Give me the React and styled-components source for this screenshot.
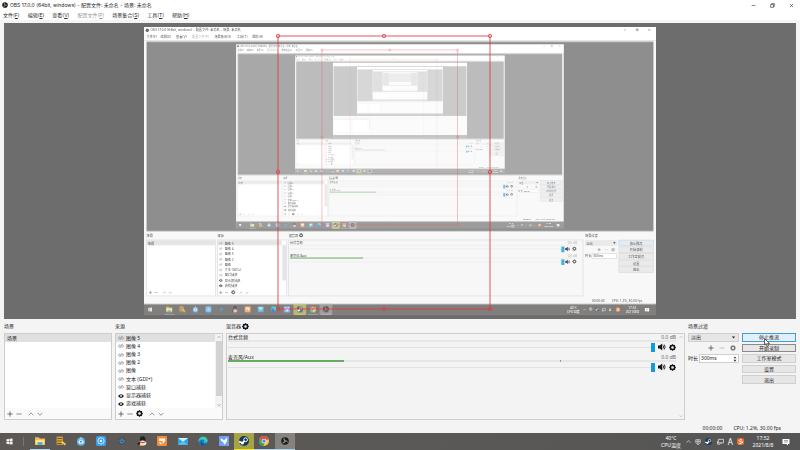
import React from 'react';
import styled, { createGlobalStyle } from 'styled-components';

const sans = '"Noto Sans", "Noto Sans CJK SC", sans-serif';
const wide = 'Inter, "Noto Sans CJK SC", sans-serif';

const menus = [
  { name: '文件', letter: 'F' },
  { name: '编辑', letter: 'E' },
  { name: '查看', letter: 'V' },
  { name: '配置文件', letter: 'P', disabled: true },
  { name: '场景集合', letter: 'S' },
  { name: '工具', letter: 'T' },
  { name: '帮助', letter: 'H' },
];

const sources = [
  { name: '图像 5' },
  { name: '图像 4' },
  { name: '图像 3' },
  { name: '图像 2' },
  { name: '图像' },
  { name: '文本 (GDI+)' },
  { name: '窗口捕获' },
  { name: '显示器捕获', visible: true },
  { name: '游戏捕获', visible: true },
];

const channels = [
  { name: '台式音频', level: 0 },
  { name: '麦克风/Aux', level: 26, peak: 74 },
];

const controls = ['停止推流', '开始录制', '工作室模式', '设置', '退出'];
const windowTitle = 'OBS 17.0.0 (64bit, windows) - 配置文件: 未命名 - 场景: 未命名';

/* ---------- icons ---------- */

function Icon({ size = 7, children, ...rest }) {
  return (
    <svg width={size} height={size} viewBox="0 0 16 16" fill="none" aria-hidden="true" {...rest}>
      {children}
    </svg>
  );
}

const Obs = (props) => (
  <Icon {...props}>
    <circle cx="8" cy="8" r="7.5" fill="#1e1e1e" />
    <path d="M8 8Q5 6 6.500 2.500M8 8q3.500-1 5.500 2M8 8q-.5 4-4.500 3.500" stroke="#b5b5b5" strokeWidth="1.800" />
  </Icon>
);

const Gear = ({ color = '#151515', ...props }) => (
  <Icon {...props}>
    <circle cx="8" cy="8" r="4.600" stroke={color} strokeWidth="3.200" />
    <path d="M8 .5V3M8 13v2.500M.5 8H3M13 8h2.500M2.700 2.700l1.800 1.800M11.500 11.500l1.800 1.800M2.700 13.300l1.800-1.800M11.500 4.500l1.800-1.800" stroke={color} strokeWidth="3" />
  </Icon>
);

const Plus = (props) => (
  <Icon {...props}><path d="M8 1v14M1 8h14" stroke="#555" strokeWidth="2.200" /></Icon>
);
const Minus = ({ color = '#777', ...props }) => (
  <Icon {...props}><path d="M1 8h14" stroke={color} strokeWidth="2.200" /></Icon>
);
const Up = ({ color = '#777', ...props }) => (
  <Icon {...props}><path d="M2 11.500l6-6.500 6 6.500" stroke={color} strokeWidth="2" /></Icon>
);
const Down = ({ color = '#777', ...props }) => (
  <Icon {...props}><path d="M2 5l6 6.500 6-6.500" stroke={color} strokeWidth="2" /></Icon>
);

const Eye = (props) => (
  <Icon {...props}>
    <path d="M0 8q8-10 16 0q-8 10-16 0z" fill="#1c1c1c" />
    <circle cx="8" cy="8" r="2.800" fill="#fff" />
    <circle cx="8" cy="8" r="1.400" fill="#1c1c1c" />
  </Icon>
);
const EyeOff = (props) => (
  <Icon {...props}>
    <path d="M6 4Q3 4.500 1 8q2 3.500 5 4M10 4q3 .5 5 4q-2 3.500-5 4M5 13l6-10" stroke="#858585" strokeWidth="1.800" />
    <circle cx="8" cy="8" r="1.800" fill="#999" />
  </Icon>
);

const Speaker = (props) => (
  <Icon {...props}>
    <path d="M0 5h3.500l5-4v14l-5-4H0z" fill="#151515" />
    <path d="M10.500 5q2 3 0 6M12.500 3q3.500 5 0 10" stroke="#151515" strokeWidth="1.700" />
  </Icon>
);

const Minimize = (props) => (
  <Icon {...props}><path d="M2 8h12" stroke="#444" strokeWidth="2" /></Icon>
);
const Restore = (props) => (
  <Icon {...props}><path d="M2 5h9v9H2zM5 5V2h9v9h-3" stroke="#333" strokeWidth="2" /></Icon>
);
const Close = (props) => (
  <Icon {...props}><path d="M3 3l10 10M13 3L3 13" stroke="#333" strokeWidth="2" /></Icon>
);

const Windows = (props) => (
  <Icon {...props}>
    <path d="M1 3l6-1v5.500H1zM8 1.800L15 1v6.500H8zM1 8.500h6V14l-6-1zM8 8.500h7V15l-7-.8z" fill="#f4f4f4" />
  </Icon>
);

const Folder = (props) => (
  <Icon {...props}>
    <path d="M0 2h6l2 2h8v10H0z" fill="#e9b949" />
    <path d="M1 6h14v8H1z" fill="#fbe28d" />
    <path d="M4 10h8v4H4z" fill="#4ca3d8" />
  </Icon>
);
const Tool = (props) => (
  <Icon {...props}>
    <path d="M1 1h10v13H1z" fill="#d9a63c" />
    <path d="M2 4h8M2 8h8M2 12h7" stroke="#5e4618" strokeWidth="1.300" />
    <path d="M9 9l6 5" stroke="#f4cb55" strokeWidth="3" />
  </Icon>
);
const Bird = (props) => (
  <Icon {...props}>
    <circle cx="8" cy="9" r="6.500" fill="#61b1e8" />
    <path d="M8 1l3 4-6 1z" fill="#9bd3f7" />
    <path d="M4 8q4-3 8 0v3q-4 3-8 0z" fill="#e3f3fd" />
    <circle cx="8" cy="9" r="1.500" fill="#2780c4" />
  </Icon>
);
const Ring = (props) => (
  <Icon {...props}>
    <rect width="16" height="16" rx="3" fill="#3d9eea" />
    <circle cx="8" cy="8" r="5" stroke="#d8efff" strokeWidth="1.500" />
    <circle cx="8" cy="8" r="2" fill="#d8efff" />
  </Icon>
);
const Power = (props) => (
  <Icon {...props}>
    <circle cx="8" cy="8" r="7" fill="#3f5566" />
    <path d="M5.500 5a4 4 0 1 0 5 0M8 3v5" stroke="#5aa5d0" strokeWidth="1.700" />
  </Icon>
);
const Penguin = (props) => (
  <Icon {...props}>
    <ellipse cx="9" cy="6" rx="4.500" ry="5.500" fill="#222" />
    <ellipse cx="9" cy="11" rx="6" ry="4" fill="#f4f4f4" />
    <path d="M4 8q5 3 10 0v2q-5 3-10 0z" fill="#d84234" />
    <path d="M1 11l4-2v5H1z" fill="#222" />
    <path d="M4 14h8l-1 2H5z" fill="#e9a22c" />
  </Icon>
);
const Orange = (props) => (
  <Icon {...props}>
    <rect width="16" height="16" rx="2" fill="#ee8c3f" />
    <path d="M3 4h10v4l-4 5V8H3z" fill="#fff3e5" />
    <path d="M4 10l3 3" stroke="#fff3e5" strokeWidth="2" />
  </Icon>
);
const Mail = (props) => (
  <Icon {...props}>
    <path d="M0 3h16v11H0z" fill="#2fa3e4" />
    <path d="M0 3h16l-8 6z" fill="#d5f0fd" />
    <path d="M0 14l8-6 8 6z" fill="#54c4f4" />
  </Icon>
);
const Edge = (props) => (
  <Icon {...props}>
    <circle cx="8" cy="8" r="7.500" fill="#1b7dc9" />
    <path d="M1 7C2 0 14-1 15.500 7c0 3-3 4-6 3q2-4-2-4.500Q3 5 1 9z" fill="#43cba2" />
    <path d="M6 8q0 6 7 5-3 3-7 2-4-3 0-7z" fill="#164f93" />
  </Icon>
);
const Swallow = (props) => (
  <Icon {...props}>
    <rect width="16" height="16" rx="1" fill="#6ba0f2" />
    <path d="M2 4q4 0 6 3l5-5q1 9-5 12l-1-4q-4-1-5-6z" fill="#fff" />
  </Icon>
);
const Steam = (props) => (
  <Icon {...props}>
    <circle cx="8" cy="8" r="8" fill="#173957" />
    <circle cx="10.500" cy="6" r="3" stroke="#fff" strokeWidth="1.600" />
    <path d="M0 9l5 2 4-3" stroke="#fff" strokeWidth="2.600" />
    <circle cx="5.500" cy="11.500" r="2.200" fill="#fff" />
  </Icon>
);
const Chrome = (props) => (
  <Icon {...props}>
    <circle cx="8" cy="8" r="8" fill="#f3c94a" />
    <path d="M1 4a8 8 0 0 1 14 0l.5 2H8L5 10z" fill="#de5145" />
    <path d="M1 4l4 6 4 2-2 4A8 8 0 0 1 1 4z" fill="#3fa15c" />
    <circle cx="8" cy="8" r="3.800" fill="#fff" />
    <circle cx="8" cy="8" r="2.800" fill="#4b86e4" />
  </Icon>
);

const Shield = (props) => (
  <Icon {...props}><path d="M2 2h12v7q-2 4-6 6-4-2-6-6zM8 2v12M3 7h10" stroke="#ddd" strokeWidth="2" /></Icon>
);
const Monitor = (props) => (
  <Icon {...props}><path d="M3 3h12v8H3zM1 7v7h6M9 11v3" stroke="#e4e4e4" strokeWidth="1.800" /></Icon>
);
const Sogou = (props) => (
  <Icon {...props}>
    <rect width="16" height="16" rx="5" fill="#f06a2b" />
    <path d="M11.500 4.500Q5 2.500 5 6t6 3-1 3-6-.500" stroke="#fff" strokeWidth="2" />
  </Icon>
);
const Notes = (props) => (
  <Icon {...props}>
    <path d="M1 2h14v10h-3v3l-3-3H1z" fill="#fff" />
    <path d="M4 5h8M4 8h8" stroke="#777" strokeWidth="1.300" />
  </Icon>
);

const tasks = [
  { name: 'explorer', Glyph: Folder, running: true },
  { name: 'tool', Glyph: Tool },
  { name: 'bird', Glyph: Bird },
  { name: 'ring', Glyph: Ring },
  { name: 'power', Glyph: Power },
  { name: 'qq', Glyph: Penguin },
  { name: 'orange', Glyph: Orange },
  { name: 'mail', Glyph: Mail },
  { name: 'edge', Glyph: Edge },
  { name: 'swallow', Glyph: Swallow },
  { name: 'steam', Glyph: Steam, running: true, tint: '#a5a348', line: '#f0e51f' },
  { name: 'chrome', Glyph: Chrome, running: true },
  { name: 'obs', Glyph: Obs, running: true, tint: '#858280' },
];

/* ---------- captured desktop shown in the preview ---------- */

function Frame({ opacity = 1 }) {
  const handles = [[278, 36], [384, 36], [490, 36], [278, 172], [490, 172], [278, 309], [384, 309], [490, 309]];
  return (
    <g fill="none" stroke="#dc3c44" opacity={opacity}>
      <rect x="278" y="36" width="212" height="273" />
      {handles.map(([x, y]) => <circle key={`${x}-${y}`} cx={x} cy={y} r="1.700" />)}
    </g>
  );
}

function DesktopDetails() {
  return (
    <>
      <Obs x="2" y="2" size={6} />
      <FeedText x="10" y="7" $wide>{windowTitle}</FeedText>
      <Minimize x="749" y="2" size={5} />
      <Restore x="768" y="2" size={5} />
      <Close x="787" y="2" size={5} />
      {menus.map(({ name, letter, disabled }, i) => (
        <FeedText key={name} x={[4, 26, 50, 75, 110, 145, 169][i]} y="17" $wide $dim={disabled}>
          {`${name}(${letter})`}
        </FeedText>
      ))}

      <FeedText x="4" y="328">场景</FeedText>
      <FeedText x="115" y="328">来源</FeedText>
      <FeedText x="226" y="328">混音器</FeedText>
      <FeedText x="689" y="328">场景过渡</FeedText>
      <Gear x="242" y="322" />
      <FeedText x="6" y="340">场景</FeedText>
      {sources.map(({ name, visible }, i) => (
        <React.Fragment key={name}>
          {visible
            ? <Eye x="117" y={335 + i * 8.3} size={6} />
            : <EyeOff x="117" y={335 + i * 8.3} size={6} />}
          <FeedText x="126" y={340 + i * 8.3}>{name}</FeedText>
        </React.Fragment>
      ))}
      {[7, 117].map((x) => (
        <React.Fragment key={x}>
          <Plus x={x} y="412" size={6} />
          <Minus x={x + 9} y="412" size={6} />
          <Up x={x === 7 ? 29 : 149} y="412" size={6} />
          <Down x={x === 7 ? 38 : 158} y="412" size={6} />
        </React.Fragment>
      ))}
      <Gear x="136" y="411" />
      {channels.map(({ name, level }, i) => (
        <React.Fragment key={name}>
          <FeedText x="228" y={339 + i * 20}>{name}</FeedText>
          <FeedText x="662" y={339 + i * 20} $dim>0.0 dB</FeedText>
          <path d={`M228 ${341 + i * 20}h449M228 ${347 + i * 20}h424`} stroke="#e2e2e2" />
          <rect x="228" y={360} width={level * 4.4} height="2" fill="#66ad62" />
          <rect x="652" y={343 + i * 20} width="5" height="9" fill="#0f9bdc" />
          <Speaker x="658" y={343 + i * 20} size={8} />
          <Gear x="669" y={343 + i * 20} />
        </React.Fragment>
      ))}
      <rect x="689" y="333" width="50" height="9" fill="#e4e4e4" />
      <FeedText x="691" y="340">淡出</FeedText>
      <path d="M733 336h4l-2 3z" fill="#333" />
      <Plus x="708" y="345" size={6} />
      <Minus x="719" y="345" size={6} color="#bbb" />
      <Gear x="730" y="345" size={6} color="#777" />
      <rect x="700" y="354" width="38" height="8" fill="#fff" stroke="#ccc" />
      <FeedText x="689" y="360">时长</FeedText>
      <FeedText x="702" y="360">300ms</FeedText>
      {controls.map((name, i) => (
        <React.Fragment key={name}>
          <rect x="742" y={333 + i * 10.4} width="54" height="9" fill="#e4e4e4" stroke={i ? '#cfcfcf' : '#9ccdeb'} />
          <FeedText x="769" y={340 + i * 10.4} $middle>{name}</FeedText>
        </React.Fragment>
      ))}
      <FeedText x="700" y="430">00:00:00</FeedText>
      <FeedText x="731" y="430">CPU: 1.2%, 30.00 fps</FeedText>

      <Windows x="6" y="438" />
      {tasks.map(({ name, Glyph, tint, line, running }, i) => {
        const x = 29.5 + i * 20.4;
        return (
          <React.Fragment key={name}>
            {tint && <rect x={x} y="433" width="20" height="17" fill={tint} />}
            {running && <rect x={x + 2} y="449" width="16" height="1" fill={line || '#a9d3ea'} />}
            <Glyph x={x + 5} y="436" size={10} />
          </React.Fragment>
        );
      })}
      <FeedText x="671" y="440" $middle $light>40°C</FeedText>
      <FeedText x="671" y="447" $middle $light>CPU温度</FeedText>
      <Up x="686" y="439" size={5} color="#eee" />
      <Shield x="695" y="438" size={6} />
      <Steam x="705" y="438" size={6} />
      <Monitor x="715" y="438" size={7} />
      <FeedText x="728" y="444" $middle $light>A</FeedText>
      <Sogou x="737" y="438" />
      <FeedText x="763" y="440" $middle $light>17:52</FeedText>
      <FeedText x="763" y="447" $middle $light>2021/8/8</FeedText>
      <Notes x="782" y="438" size={8} />
    </>
  );
}

// every level holds a paler, smaller copy of the whole desktop
function Desktop({ depth }) {
  return (
    <svg x="144" y="27" width="512" height="288" viewBox="0 0 800 450">
      <rect width="800" height="450" fill="#fff" />
      <g opacity="0.77">
        <rect y="20" width="800" height="413" fill="#f6f6f6" />
        <rect x="4" y="23" width="792" height="296" fill="#6d6d6d" />
        <rect x="4" y="333" width="108" height="87" fill="#fff" stroke="#d0d0d0" />
        <rect x="115" y="333" width="108" height="87" fill="#fff" stroke="#d0d0d0" />
        <rect x="226" y="333" width="460" height="87" fill="#f5f5f5" stroke="#d0d0d0" />
        <path d="M4 334h108v7H4zM115 334h100v7H115zM216 341h6v55h-6z" fill="#dcdcdc" />
        <rect y="433" width="800" height="17" fill="#5b5957" />
        {depth < 4 && <DesktopDetails />}
        {depth < 8 && <Desktop depth={depth + 1} />}
        {depth < 4 && <Frame opacity={0.6 / depth} />}
      </g>
    </svg>
  );
}

/* ---------- window ---------- */

export default function App() {
  return (
    <Screen>
      <GlobalStyle />
      <TitleBar>
        <Obs size={6} />
        <Title>{windowTitle}</Title>
        <WindowButton aria-label="最小化"><Minimize size={5} /></WindowButton>
        <WindowButton aria-label="还原"><Restore size={5} /></WindowButton>
        <WindowButton aria-label="关闭"><Close size={5} /></WindowButton>
      </TitleBar>
      <MenuBar>
        {menus.map(({ name, letter, disabled }) => (
          <MenuItem key={name} disabled={disabled}>
            {name}(<u>{letter}</u>)
          </MenuItem>
        ))}
      </MenuBar>

      <Preview>
        <Canvas viewBox="144 27 512 288" overflow="visible">
          <Desktop depth={1} />
          <Frame opacity={0.85} />
        </Canvas>
      </Preview>

      <Docks>
        <Dock>
          <DockTitle>场景</DockTitle>
          <Panel $white>
            <List>
              <Row $selected>场景</Row>
            </List>
            <Toolbar>
              <IconButton aria-label="添加场景"><Plus size={6} /></IconButton>
              <IconButton aria-label="移除场景"><Minus size={6} /></IconButton>
              <Spacer />
              <IconButton aria-label="上移场景"><Up size={6} /></IconButton>
              <IconButton aria-label="下移场景"><Down size={6} /></IconButton>
            </Toolbar>
          </Panel>
        </Dock>

        <Dock>
          <DockTitle>来源</DockTitle>
          <Panel $white>
            <ListArea>
              <List>
                {sources.map(({ name, visible }, i) => (
                  <Row key={name} $selected={i === 0}>
                    <IconButton aria-label={`显示 ${name}`}>
                      {visible ? <Eye size={6} /> : <EyeOff size={6} />}
                    </IconButton>
                    {name}
                  </Row>
                ))}
              </List>
              <Scrollbar>
                <Up size={4} />
                <Thumb />
                <Down size={4} />
              </Scrollbar>
            </ListArea>
            <Toolbar>
              <IconButton aria-label="添加来源"><Plus size={6} /></IconButton>
              <IconButton aria-label="移除来源"><Minus size={6} /></IconButton>
              <IconButton aria-label="来源设置"><Gear size={7} /></IconButton>
              <Spacer />
              <IconButton aria-label="上移来源"><Up size={6} /></IconButton>
              <IconButton aria-label="下移来源"><Down size={6} /></IconButton>
            </Toolbar>
          </Panel>
        </Dock>

        <Dock>
          <DockTitle>
            混音器
            <IconButton aria-label="高级音频属性"><Gear size={7} /></IconButton>
          </DockTitle>
          <Panel>
            <ListArea>
              <Mixer>
                {channels.map(({ name, level, peak }, i) => (
                  <Channel key={name}>
                    <ChannelHead>
                      <label htmlFor={`volume-${i}`}>{name}</label>
                      <Decibel>0.0 dB</Decibel>
                    </ChannelHead>
                    <Meter>
                      <Level style={{ width: `${level}%` }} />
                      {peak && <Peak style={{ left: `${peak}%` }} />}
                    </Meter>
                    <ChannelControls>
                      <Volume id={`volume-${i}`} type="range" min="0" max="100" defaultValue="100" />
                      <IconButton aria-label={`静音 ${name}`}><Speaker size={8} /></IconButton>
                      <IconButton aria-label={`设置 ${name}`}><Gear size={7} /></IconButton>
                    </ChannelControls>
                  </Channel>
                ))}
              </Mixer>
              <Scrollbar $plain>
                <Up size={4} color="#aaa" />
                <Down size={4} color="#aaa" />
              </Scrollbar>
            </ListArea>
          </Panel>
        </Dock>

        <Dock>
          <DockTitle>场景过渡</DockTitle>
          <SelectBox>
            <Select aria-label="场景过渡" defaultValue="淡出">
              <option>淡出</option>
            </Select>
            <Icon size={5}><path d="M3 5h10l-5 6z" fill="#222" /></Icon>
          </SelectBox>
          <TransitionTools>
            <IconButton aria-label="添加过渡"><Plus size={6} /></IconButton>
            <IconButton aria-label="移除过渡"><Minus size={6} color="#bbb" /></IconButton>
            <IconButton aria-label="过渡属性"><Gear size={6} color="#777" /></IconButton>
          </TransitionTools>
          <Duration>
            <label htmlFor="duration">时长</label>
            <Spin>
              <SpinInput id="duration" defaultValue="300ms" />
              <Icon size={6}><path d="M4 6l4-5 4 5zM4 10l4 5 4-5z" fill="#333" /></Icon>
            </Spin>
          </Duration>
        </Dock>

        <Dock>
          <DockTitle />
          <Controls>
            {controls.map((name, i) => (
              <ControlButton key={name} $border={['#3c9fd8', '#8a8a8a'][i]} $hot={i === 0}>
                {name}
              </ControlButton>
            ))}
            <Pointer width="6" height="9" viewBox="0 0 12 18" aria-hidden="true">
              <path d="M1 1v13l3-3 2 6 3-1-2-5h4z" fill="#fff" stroke="#333" strokeWidth="1.500" />
            </Pointer>
          </Controls>
        </Dock>
      </Docks>

      <StatusBar>
        <span>00:00:00</span>
        <span>CPU: 1.2%, 30.00 fps</span>
      </StatusBar>

      <Taskbar>
        <Start aria-label="开始"><Windows size={7} /></Start>
        <Tasks>
          {tasks.map(({ name, Glyph, running, tint, line }) => (
            <Task key={name} aria-label={name} $running={running} $tint={tint} $line={line}>
              <Glyph size={name === 'obs' || name === 'power' ? 8 : 10} />
            </Task>
          ))}
        </Tasks>
        <TrayText>
          <span>40°C</span>
          <span>CPU温度</span>
        </TrayText>
        <Tray>
          <Up size={5} color="#eee" />
          <Shield size={6} />
          <Steam size={7} />
          <Monitor size={7} />
          <Ime>A</Ime>
          <Sogou size={7} />
        </Tray>
        <TrayText>
          <span>17:52</span>
          <span>2021/8/8</span>
        </TrayText>
        <Notice aria-label="通知"><Notes size={8} /></Notice>
      </Taskbar>
    </Screen>
  );
}

const GlobalStyle = createGlobalStyle`
  * {
    box-sizing: border-box;
  }

  body {
    margin: 0;
  }

  button, input, select {
    margin: 0;
    padding: 0;
    border: 0;
    background: none;
    color: inherit;
    font: inherit;
  }

  svg {
    flex-shrink: 0;
  }
`;

const Screen = styled.main`
  display: flex;
  flex-direction: column;
  height: 100vh;
  background: #f4f4f4;
  color: #262626;
  font-family: ${sans};
  font-size: 5px;
  line-height: 7px;
`;

const FeedText = styled.text`
  font-family: ${({ $wide }) => ($wide ? wide : sans)};
  font-size: 5px;
  fill: ${({ $light, $dim }) => ($light ? '#fff' : $dim ? '#999' : '#262626')};
  text-anchor: ${({ $middle }) => ($middle ? 'middle' : 'start')};
`;

const TitleBar = styled.header`
  display: flex;
  align-items: center;
  gap: 2px;
  height: 10px;
  padding-left: 2px;
  background: #fff;
  font-family: ${wide};
`;

const Title = styled.span`
  flex: 1;
`;

const WindowButton = styled.button`
  display: flex;
  align-items: center;
  justify-content: center;
  width: 17px;
  height: 10px;
`;

const MenuBar = styled.nav`
  display: flex;
  align-items: center;
  gap: 8px;
  height: 10px;
  padding-left: 3px;
  background: #fff;
  font-family: ${wide};
`;

const MenuItem = styled.button`
  color: ${({ disabled }) => (disabled ? '#999' : '#262626')};
`;

const Preview = styled.section`
  display: flex;
  flex: 1;
  min-height: 0;
  margin: 3px 4px 0;
  padding: 4px 0;
  background: #6d6d6d;
`;

const Canvas = styled.svg`
  width: 100%;
  height: 100%;
`;

const Docks = styled.div`
  display: grid;
  grid-template-columns: 108px 108px 1fr 51px 54px;
  gap: 3px;
  padding: 0 4px;
`;

const Dock = styled.section`
  display: flex;
  flex-direction: column;
  min-width: 0;
`;

const DockTitle = styled.div`
  display: flex;
  align-items: center;
  gap: 1px;
  height: 14px;
`;

const Panel = styled.div`
  display: flex;
  flex-direction: column;
  height: 87px;
  border: 1px solid #cdcdcd;
  background: ${({ $white }) => ($white ? '#fff' : '#f3f3f3')};
`;

const ListArea = styled.div`
  display: flex;
  flex: 1;
  min-height: 0;
`;

const List = styled.div`
  display: grid;
  grid-template-rows: repeat(9, 1fr);
  flex: 1;
`;

const Row = styled.div`
  display: flex;
  align-items: center;
  gap: 2px;
  padding-left: 2px;
  background: ${({ $selected }) => ($selected ? '#e0e0e0' : 'none')};
`;

const Scrollbar = styled.div`
  display: flex;
  flex-direction: column;
  align-items: center;
  justify-content: space-between;
  gap: 2px;
  width: 7px;
  padding: 1px 0;
  background: ${({ $plain }) => ($plain ? 'none' : '#f3f3f3')};
`;

const Thumb = styled.div`
  width: 6px;
  height: 55px;
  margin-bottom: auto;
  background: #d2d2d2;
`;

const Toolbar = styled.div`
  display: flex;
  align-items: center;
  gap: 3px;
  height: 11px;
  padding-left: 2px;
  background: #fafafa;
`;

const Spacer = styled.span`
  width: 0;
`;

const IconButton = styled.button`
  display: flex;
  align-items: center;
  justify-content: center;
`;

const Mixer = styled.div`
  display: flex;
  flex-direction: column;
  flex: 1;
  gap: 2px;
  padding: 0 1px;
`;

const Channel = styled.div`
  display: flex;
  flex-direction: column;
`;

const ChannelHead = styled.div`
  display: flex;
  align-items: center;
  justify-content: space-between;
  height: 6px;
`;

const Decibel = styled.output`
  color: #666;
`;

const Meter = styled.div`
  position: relative;
  height: 2px;
  background: #e6e6e6;
`;

const Level = styled.div`
  height: 2px;
  background: #66ad62;
`;

const Peak = styled.i`
  position: absolute;
  top: 0;
  width: 1px;
  height: 2px;
  background: #999;
`;

const ChannelControls = styled.div`
  display: flex;
  align-items: center;
  gap: 3px;
  height: 10px;
`;

const Volume = styled.input`
  flex: 1;
  min-width: 0;
  height: 9px;
  appearance: none;
  background: linear-gradient(#e2e2e2, #e2e2e2) center / 100% 1px no-repeat;

  &::-webkit-slider-thumb {
    appearance: none;
    width: 4px;
    height: 9px;
    background: #0f9bdc;
  }
`;

const SelectBox = styled.div`
  display: flex;
  align-items: center;
  height: 9px;
  padding: 0 2px;
  border: 1px solid #cfcfcf;
  background: #e6e6e6;
`;

const Select = styled.select`
  flex: 1;
  min-width: 0;
  height: 7px;
  appearance: none;
`;

const TransitionTools = styled.div`
  display: flex;
  align-items: center;
  justify-content: flex-end;
  gap: 5px;
  height: 12px;
  padding-right: 3px;
`;

const Duration = styled.div`
  display: flex;
  align-items: center;
  gap: 1px;
  height: 9px;
  white-space: nowrap;
`;

const Spin = styled.div`
  display: flex;
  align-items: center;
  flex: 1;
  height: 9px;
  border: 1px solid #cfcfcf;
  background: #fff;
`;

const SpinInput = styled.input`
  flex: 1;
  width: 0;
  height: 7px;
  padding-left: 1px;
`;

const Controls = styled.div`
  position: relative;
  display: grid;
  grid-template-rows: repeat(5, 1fr);
  gap: 2px;
  height: 51px;
`;

const ControlButton = styled.button`
  min-height: 0;
  border: 1px solid ${({ $border }) => $border || '#d0d0d0'};
  background: ${({ $hot }) => ($hot ? '#e3eff7' : '#e6e6e6')};
  line-height: 6px;
`;

const Pointer = styled.svg`
  position: absolute;
  top: 5px;
  left: 22px;
`;

const StatusBar = styled.footer`
  display: flex;
  align-items: center;
  justify-content: flex-end;
  gap: 11px;
  height: 13px;
  padding: 3px 19px 0 0;
`;

const Taskbar = styled.footer`
  display: flex;
  align-items: center;
  height: 17px;
  background: linear-gradient(90deg, #5c5855, #5b5957 50%, #555);
  color: #fff;
`;

const Start = styled.button`
  display: flex;
  align-items: center;
  justify-content: center;
  width: 24px;
  height: 9px;
  padding-right: 4px;
  border-right: 1px solid #777;
`;

const Tasks = styled.div`
  display: grid;
  grid-template-columns: repeat(13, 1fr);
  width: 265px;
  height: 17px;
  margin: 0 auto 0 6px;
`;

const Task = styled.button`
  display: flex;
  align-items: center;
  justify-content: center;
  border-bottom: 1px solid ${({ $running, $line }) => ($running ? $line || '#a9d3ea' : 'transparent')};
  background: ${({ $tint }) => $tint || 'none'};
`;

const TrayText = styled.div`
  display: flex;
  flex-direction: column;
  align-items: center;
  width: 26px;
  white-space: nowrap;
`;

const Tray = styled.div`
  display: flex;
  align-items: center;
  justify-content: space-between;
  width: 58px;
  margin: 0 6px 0 2px;
`;

const Ime = styled.span`
  font-size: 8px;
`;

const Notice = styled.button`
  display: flex;
  align-items: center;
  justify-content: center;
  width: 20px;
  height: 17px;
  margin-right: 4px;
`;
